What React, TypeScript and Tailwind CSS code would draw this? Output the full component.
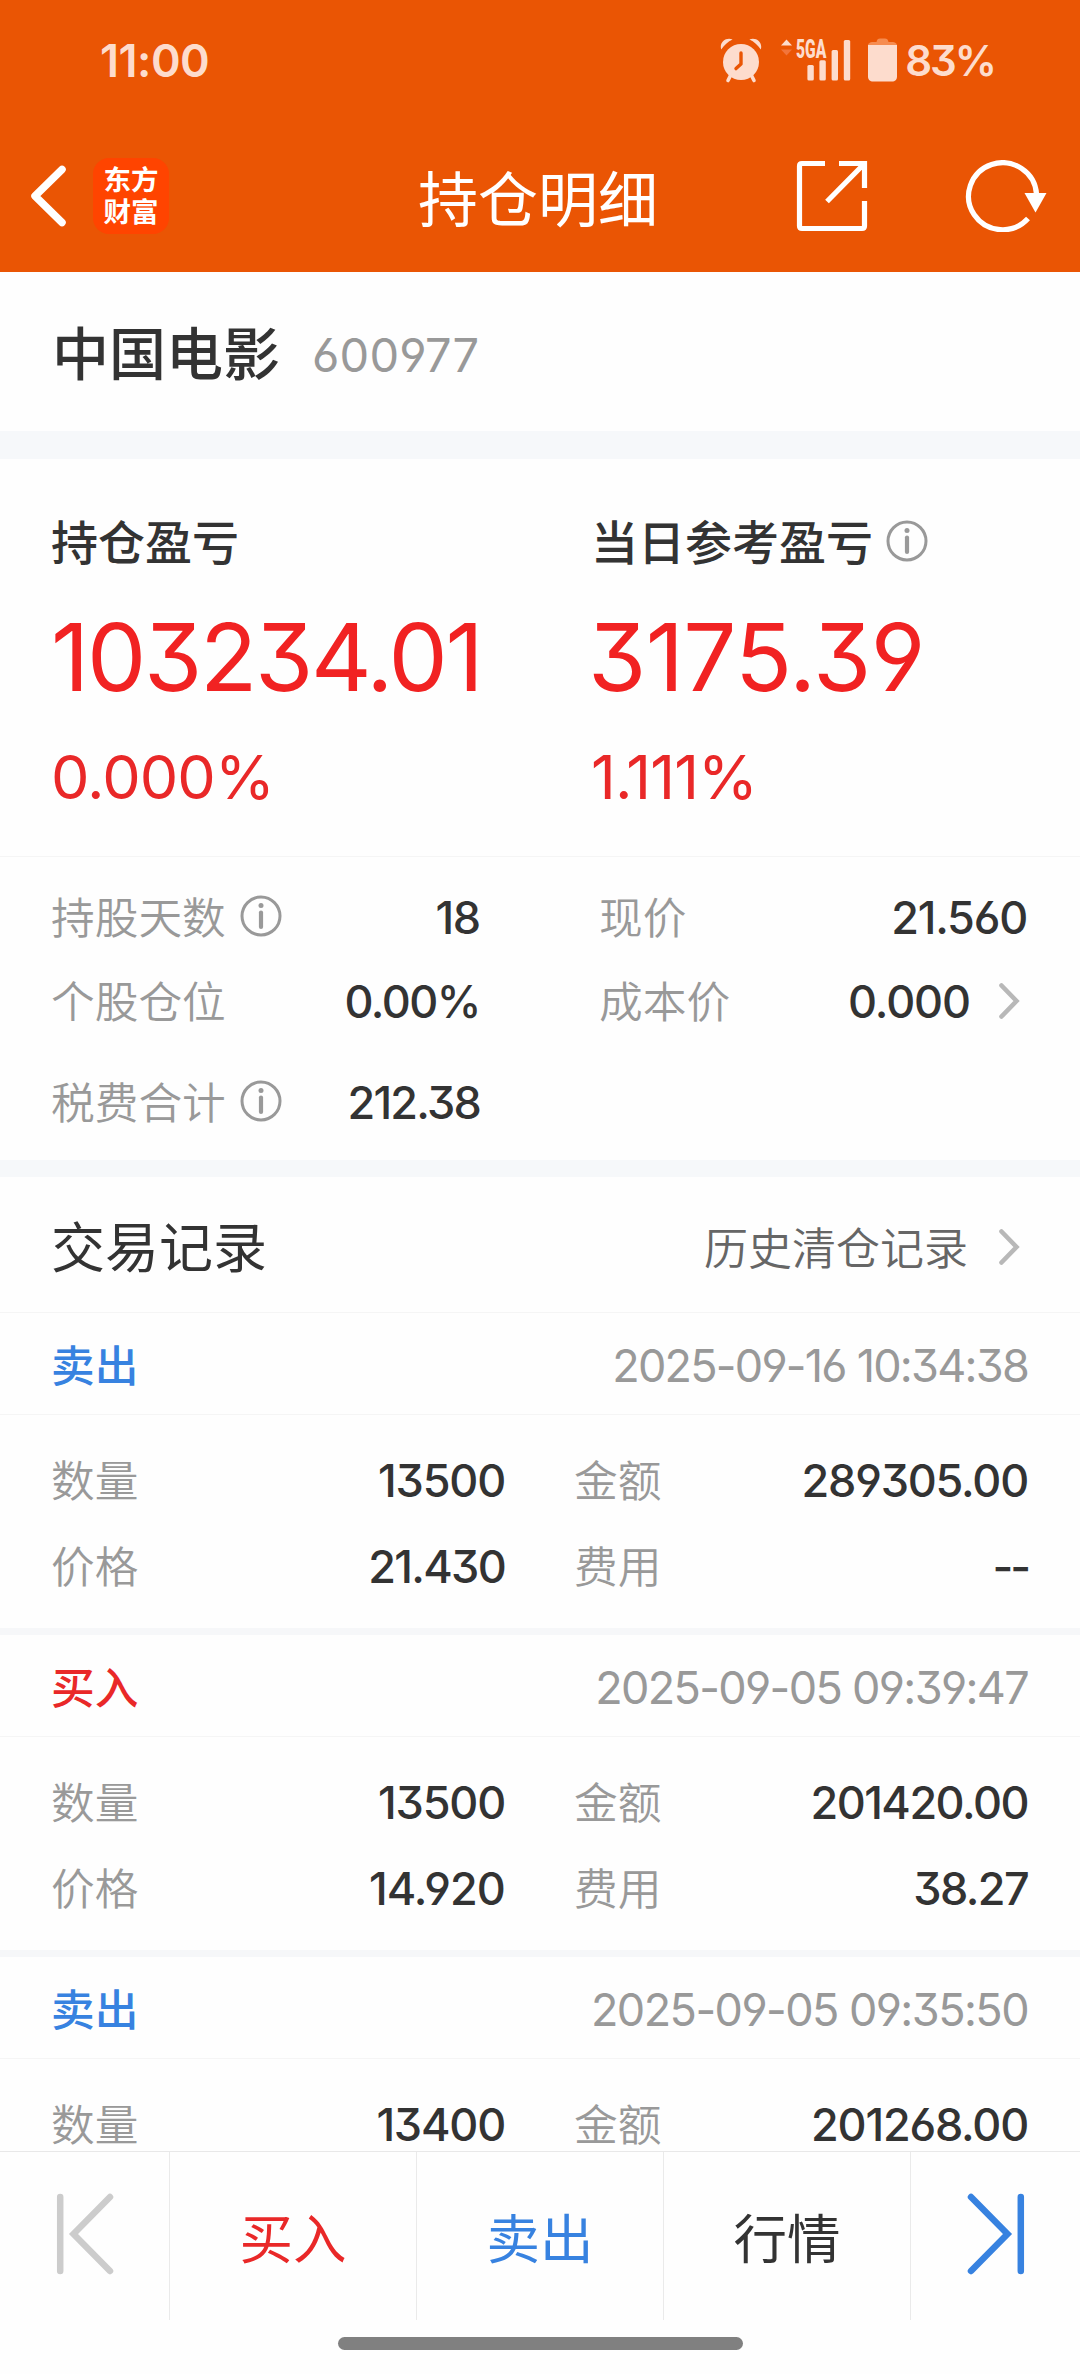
import type { ReactNode } from "react";

function InfoIcon() {
  return (
    <svg className="mb-1 shrink-0" width="42" height="42" viewBox="0 0 42 42" fill="none">
      <circle cx="21" cy="21" r="19" stroke="#999999" strokeWidth="3" />
      <circle cx="21" cy="10.5" r="2.5" fill="#999999" />
      <path d="M21 17.5V32" stroke="#999999" strokeWidth="4.2" strokeLinecap="round" />
    </svg>
  );
}

function ChevronRight() {
  return (
    <svg className="shrink-0" width="22" height="38" viewBox="0 0 22 38" fill="none">
      <path d="M3.5 3.5L18.5 19L3.5 34.5" stroke="#b8b8b8" strokeWidth="4.6" strokeLinecap="round" strokeLinejoin="miter" />
    </svg>
  );
}

function AlarmIcon() {
  return (
    <svg width="42" height="45" viewBox="0 0 42 45" fill="none">
      <circle cx="21" cy="24" r="18" fill="#fddccd" />
      <path d="M1.2 11.5C-1 4 6-1.2 12.6 1.4C8 3.6 4 7 1.2 11.5Z" fill="#fddccd" />
      <path d="M40.8 11.5C43 4 36-1.2 29.4 1.4C34 3.6 38 7 40.8 11.5Z" fill="#fddccd" />
      <path d="M10.5 37.5L8 42.5M31.5 37.5L34 42.5" stroke="#fddccd" strokeWidth="3.6" strokeLinecap="round" />
      <path d="M21 15V26L16 30.6" stroke="#ea5504" strokeWidth="3.4" strokeLinecap="round" strokeLinejoin="round" />
    </svg>
  );
}

function SignalIcon() {
  return (
    <div className="relative h-[42px] w-[70px]">
      <svg width="70" height="42" viewBox="0 0 70 42" fill="none">
        <path d="M0 6.5L5.5 0.5L11 6.5Z" fill="#fddccd" />
        <path d="M0 10.5L5.5 16.5L11 10.5Z" fill="#f2753a" />
        <rect x="26.4" y="26" width="6.4" height="15.5" rx="1.5" fill="#fddccd" />
        <rect x="38.4" y="21.3" width="6.4" height="20.2" rx="1.5" fill="#fddccd" />
        <rect x="50.6" y="11" width="6.4" height="30.5" rx="1.5" fill="#fddccd" />
        <rect x="62.8" y="1" width="6.4" height="40.5" rx="1.5" fill="#fddccd" />
      </svg>
      <span className="absolute top-[-3px] left-[15px] origin-left scale-x-[0.6] font-['Roboto'] text-[26px] leading-[26px] font-black">
        5GA
      </span>
    </div>
  );
}

function BatteryIcon() {
  return (
    <svg width="29" height="44" viewBox="0 0 29 44" fill="none">
      <path d="M0 8C0 5 2 4 5 4H8.5C9 1.5 10 0.5 12 0.5H17C19 0.5 20 1.5 20.5 4H24C27 4 29 5 29 8Z" fill="#f68c50" />
      <path d="M0 7H29V38.5C29 42 27 43.5 24 43.5H5C2 43.5 0 42 0 38.5Z" fill="#fddccd" />
    </svg>
  );
}

function Header() {
  return (
    <header className="h-[272px] shrink-0 bg-[#ea5504] text-white">
      <div className="flex h-[120px] items-center justify-between pr-[85px] pl-[100px] text-[#fddccd]">
        <span className="text-[45px] leading-none font-semibold tracking-[-0.5px]">11:00</span>
        <div className="flex items-center">
          <AlarmIcon />
          <span className="ml-[19px]">
            <SignalIcon />
          </span>
          <span className="mb-px ml-[17px]">
            <BatteryIcon />
          </span>
          <span className="mt-[2px] ml-[8px] text-[42px] leading-none font-semibold tracking-[-2px]">83%</span>
        </div>
      </div>
      <nav className="grid h-[152px] grid-cols-[1fr_auto_1fr] items-center pr-[33px] pl-[29px]">
        <div className="flex items-center">
          <svg width="38" height="62" viewBox="0 0 38 62" fill="none">
            <path d="M33 4.5L6 31L33 57.5" stroke="white" strokeWidth="7.5" strokeLinecap="round" strokeLinejoin="round" />
          </svg>
          <div className="ml-[26px] flex h-[76px] w-[76px] flex-col items-center justify-center rounded-[16px] bg-[#ff4400] text-[27.5px] leading-[32px] font-bold">
            <span>东方</span>
            <span>财富</span>
          </div>
        </div>
        <h1 className="mt-[8px] text-[60px] leading-none font-normal">持仓明细</h1>
        <div className="flex items-center justify-end">
          <svg width="72" height="72" viewBox="0 0 72 72" fill="none" stroke="white" strokeWidth="5.2">
            <path d="M29 3.5H6Q3.5 3.5 3.5 6V66Q3.5 68.5 6 68.5H66Q68.5 68.5 68.5 66V41" />
            <path d="M43 3.5H68.5V28M68 4L31 41.5" />
          </svg>
          <svg className="ml-[97px]" width="82" height="72" viewBox="0 0 82 72" fill="none">
            <path d="M63 58.5A34 33.5 0 1 1 71.5 34" stroke="white" strokeWidth="5.2" />
            <path d="M59.5 33H81.5L70.5 52.5Z" fill="white" />
          </svg>
        </div>
      </nav>
    </header>
  );
}

function ProfitColumn({ label, amount, percent, info, amountClass }: { label: string; amount: string; percent: string; info?: boolean; amountClass: string }) {
  return (
    <div className="pl-[51px]">
      <div className="flex h-[47px] items-center gap-[13px] text-[47px] leading-none font-medium text-[#333333]">
        {label}
        {info && <InfoIcon />}
      </div>
      <div className={"mt-[44px] text-[94px] leading-none font-[390] text-[#f12222] " + amountClass}>{amount}</div>
      <div className="mt-[43px] text-[61px] leading-none tracking-[-0.9px] text-[#e92828]">{percent}</div>
    </div>
  );
}

function Field({ label, value, info, link, valueClass = "tracking-[-1.2px]" }: { label: string; value: ReactNode; info?: boolean; link?: boolean; valueClass?: string }) {
  return (
    <div className="flex items-center text-[43.7px] leading-none">
      <span className="pt-[3px] font-[350] text-[#999999]">{label}</span>
      {info && (
        <span className="ml-[14px] pt-[2px]">
          <InfoIcon />
        </span>
      )}
      <span className={"ml-auto text-[45px] font-medium text-[#333333] " + valueClass}>{value}</span>
      {link && (
        <span className="mr-[7px] ml-[28px]">
          <ChevronRight />
        </span>
      )}
    </div>
  );
}

type Trade = {
  side: "buy" | "sell";
  time: string;
  timeClass: string;
  qty: string;
  amount: string;
  amountClass?: string;
  price?: string;
  priceClass?: string;
  fee?: string;
  feeClass?: string;
};

const trades: Trade[] = [
  { side: "sell", time: "2025-09-16 10:34:38", timeClass: "tracking-[-1.75px]", qty: "13500", amount: "289305.00", price: "21.430", priceClass: "tracking-[-1.7px]", fee: "--", feeClass: "tracking-[-3px]" },
  { side: "buy", time: "2025-09-05 09:39:47", timeClass: "tracking-[-1.65px]", qty: "13500", amount: "201420.00", amountClass: "tracking-[-1.5px]", price: "14.920", priceClass: "tracking-[-0.9px]", fee: "38.27", feeClass: "tracking-[-1.6px]" },
  { side: "sell", time: "2025-09-05 09:35:50", timeClass: "tracking-[-1.55px]", qty: "13400", amount: "201268.00" },
];

function TradeRecord({ trade }: { trade: Trade }) {
  return (
    <article className="border-b-[7px] border-[#f6f7f9]">
      <div className="flex h-[102px] items-center justify-between border-b border-[#f5f5f5] pr-[52px] pl-[51px] leading-none">
        <span className={"pt-[6px] text-[43.7px] font-medium " + (trade.side === "buy" ? "text-[#e92828]" : "text-[#3782e0]")}>
          {trade.side === "buy" ? "买入" : "卖出"}
        </span>
        <span className={"pt-[4px] text-[45px] font-[380] text-[#999999] " + trade.timeClass}>{trade.time}</span>
      </div>
      <div className="grid h-[213px] grid-cols-[454px_454px] grid-rows-[86px_86px] gap-x-[69px] pt-[22px] pl-[51px]">
        <Field label="数量" value={trade.qty} />
        <Field label="金额" value={trade.amount} valueClass={trade.amountClass} />
        {trade.price && <Field label="价格" value={trade.price} valueClass={trade.priceClass} />}
        {trade.fee && <Field label="费用" value={trade.fee} valueClass={trade.feeClass} />}
      </div>
    </article>
  );
}

function Footer() {
  return (
    <footer className="h-[223px] shrink-0 border-t border-[#e8e8e8]">
      <div className="grid h-[168px] grid-cols-[170px_247px_247px_247px_1fr] text-[53.5px] leading-none">
        <div className="flex items-center border-r border-[#eaeaea] pb-[5px] pl-[56px]">
          <svg width="58" height="82" viewBox="0 0 58 82" fill="none" stroke="#cccccc" strokeWidth="6.5" strokeLinecap="round">
            <path d="M4.2 4V78M54 4L17.5 41L54 78" />
          </svg>
        </div>
        <div className="flex items-center justify-center border-r border-[#eaeaea] pt-[8px] text-[#e92828]">买入</div>
        <div className="flex items-center justify-center border-r border-[#eaeaea] pt-[8px] text-[#3782e0]">卖出</div>
        <div className="flex items-center justify-center border-r border-[#eaeaea] pt-[8px] text-[#333333]">行情</div>
        <div className="flex items-center justify-end pr-[55px] pb-[5px]">
          <svg width="58" height="82" viewBox="0 0 58 82" fill="none" stroke="#3782e0" strokeWidth="6.5" strokeLinecap="round">
            <path d="M53.8 4V78M4 4L40.5 41L4 78" />
          </svg>
        </div>
      </div>
      <div className="mx-auto mt-[17px] h-[13px] w-[405px] rounded-full bg-[#808080]" />
    </footer>
  );
}

export default function App() {
  return (
    <div className="flex h-[2374px] w-[1080px] flex-col overflow-hidden bg-[#fefefe] font-['Inter','Noto_Sans_CJK_SC',sans-serif] whitespace-nowrap [font-feature-settings:'cv03','cv04','cv09']">
      <Header />
      <section className="flex h-[159px] shrink-0 items-center pt-[5px] pl-[52px] leading-none">
        <h2 className="text-[57px] font-medium text-[#333333]">中国电影</h2>
        <span className="ml-[32px] text-[47px] font-[370] tracking-[0.2px] text-[#999999]">600977</span>
      </section>
      <div className="h-[28px] shrink-0 bg-[#f6f8fa]" />
      <section className="grid h-[397px] shrink-0 grid-cols-2 pt-[60px]">
        <ProfitColumn label="持仓盈亏" amount="103234.01" percent="0.000%" amountClass="tracking-[-2.3px]" />
        <ProfitColumn label="当日参考盈亏" amount="3175.39" percent="1.111%" info amountClass="-ml-[3px] tracking-[-0.6px]" />
      </section>
      <section className="grid h-[304px] shrink-0 grid-cols-[429px_428px] grid-rows-[84px_84px_118px] gap-x-[119px] border-t border-[#f5f5f5] pt-[18px] pl-[51px]">
        <Field label="持股天数" value="18" info />
        <Field label="现价" value="21.560" />
        <Field label="个股仓位" value="0.00%" valueClass="tracking-[-1.5px]" />
        <Field label="成本价" value="0.000" link valueClass="tracking-[-1.1px]" />
        <Field label="税费合计" value="212.38" info valueClass="tracking-[-1.8px]" />
      </section>
      <div className="h-[17px] shrink-0 bg-[#f6f8fa]" />
      <section className="flex h-[136px] shrink-0 items-center border-b border-[#f5f5f5] pt-[8px] pr-[60px] pl-[51px] leading-none">
        <h3 className="text-[54px] font-normal text-[#333333]">交易记录</h3>
        <span className="ml-auto text-[44px] font-[350] text-[#666666]">历史清仓记录</span>
        <span className="mb-[3px] ml-[30px]">
          <ChevronRight />
        </span>
      </section>
      <main className="min-h-0 flex-1 overflow-hidden">
        {trades.map((t) => (
          <TradeRecord key={t.time} trade={t} />
        ))}
      </main>
      <Footer />
    </div>
  );
}
